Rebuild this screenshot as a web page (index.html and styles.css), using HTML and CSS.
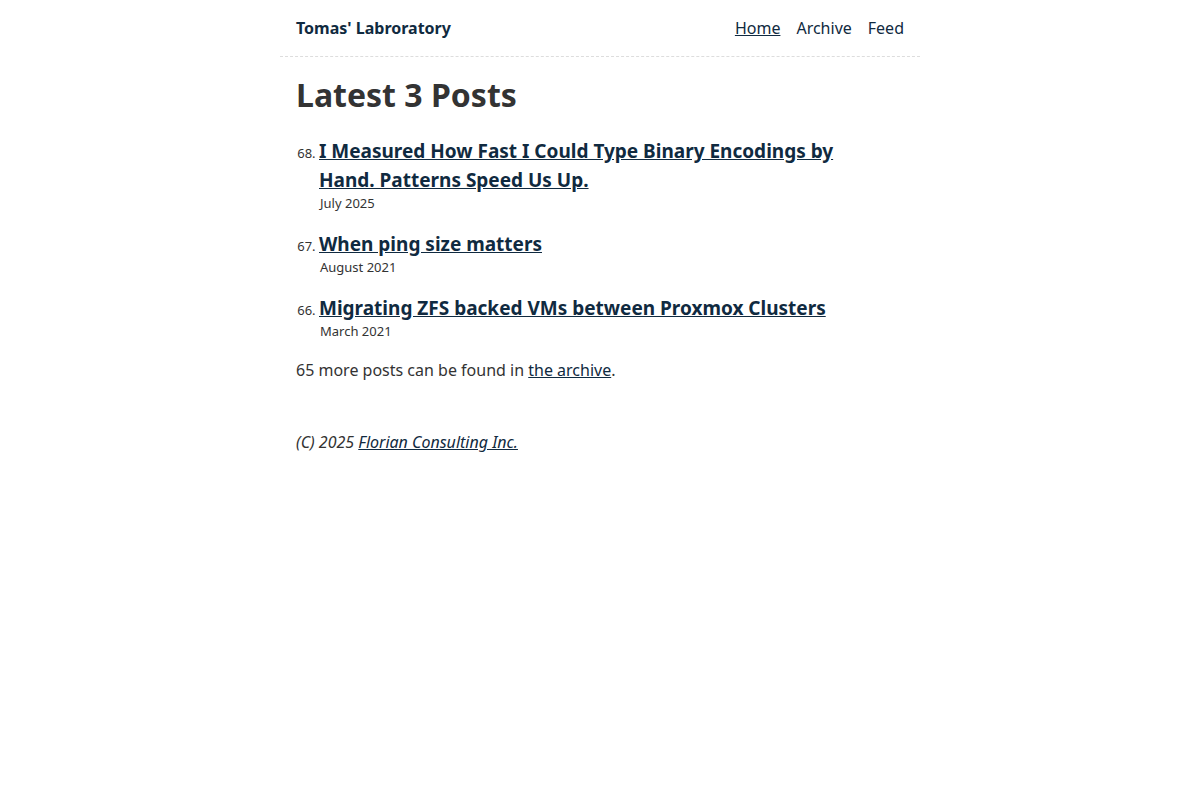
FILE: index.html
```html
<!DOCTYPE html>
<html lang="en">
<head>
  <meta charset="UTF-8" />
  <meta name="viewport" content="width=device-width, initial-scale=1.0"/>
  <title>Tomas' Labroratory</title>
  <link rel="stylesheet" href="styles.css">
</head>
<body>

  <div class="page">
    <!-- Site header -->
    <header class="site-header">
      <a href="index.html" class="site-title">Tomas' Labroratory</a>
      <nav class="site-nav">
        <a href="index.html" class="nav-link active">Home</a>
        <a href="archive.html" class="nav-link">Archive</a>
        <a href="feed.xml" class="nav-link">Feed</a>
      </nav>
    </header>

    <main class="content">
      <h1>Latest 3 Posts</h1>

      <ol class="post-list" reversed start="68">
        <li>
          <a href="#" class="post-title">I Measured How Fast I Could Type Binary Encodings by Hand. Patterns Speed Us Up.</a>
          <div class="post-date">July 2025</div>
        </li>
        <li>
          <a href="#" class="post-title">When ping size matters</a>
          <div class="post-date">August 2021</div>
        </li>
        <li>
          <a href="#" class="post-title">Migrating ZFS backed VMs between Proxmox Clusters</a>
          <div class="post-date">March 2021</div>
        </li>
      </ol>

      <p class="more">65 more posts can be found in <a href="archive.html">the archive</a>.</p>
    </main>

    <footer class="site-footer">
      (C) 2025 <a href="#">Florian Consulting Inc.</a>
    </footer>
  </div>

</body>
</html>
```

FILE: styles.css
```css
html, body {
  margin: 0;
  padding: 0;
  background: #ffffff;
  color: #333333;
  font-family: 'Noto Sans', sans-serif;
  font-size: 16px;
}

a {
  color: #102a40;
}

.page {
  max-width: 640px;
  margin: 0 auto;
}

.site-header {
  display: flex;
  justify-content: space-between;
  align-items: center;
  height: 57px;
  padding: 0 16px;
  border-bottom: 1px dashed #dddddd;
  box-sizing: border-box;
}

.site-title {
  font-weight: bold;
  text-decoration: none;
  color: #102a40;
}

.site-nav {
  display: flex;
  gap: 16px;
}

.nav-link {
  text-decoration: none;
  color: #102a40;
}

.nav-link.active {
  text-decoration: underline;
}

.content {
  padding: 0 16px;
}

h1 {
  font-size: 32px;
  line-height: 44px;
  margin: 16px 0 20px;
  color: #333333;
}

/* titles wrap a bit short of the right edge */
.post-list {
  margin: 0;
  padding: 0 40px 0 23px;
}

.post-list li {
  margin-bottom: 17px;
}

.post-list li::marker {
  font-size: 13px;
  color: #333333;
}

.post-title {
  font-size: 19px;
  font-weight: bold;
  line-height: 29px;
}

.post-date {
  font-size: 13px;
  line-height: 19px;
  margin-top: -1px;
  padding-left: 1px;
}

.more {
  margin: 16px 0 0;
  line-height: 24px;
}

.site-footer {
  padding: 0 16px;
  margin-top: 48px;
  font-style: italic;
  line-height: 24px;
}
```
